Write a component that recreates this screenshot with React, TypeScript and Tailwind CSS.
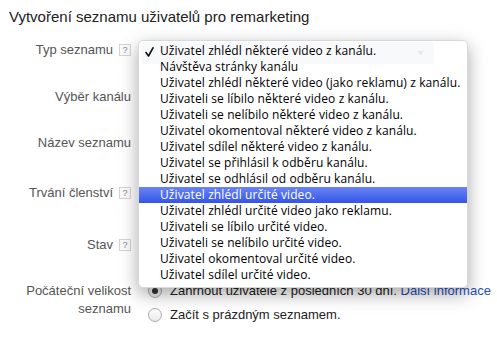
const options = [
  'Uživatel zhlédl některé video z kanálu.',
  'Návštěva stránky kanálu',
  'Uživatel zhlédl některé video (jako reklamu) z kanálu.',
  'Uživateli se líbilo některé video z kanálu.',
  'Uživateli se nelíbilo některé video z kanálu.',
  'Uživatel okomentoval některé video z kanálu.',
  'Uživatel sdílel některé video z kanálu.',
  'Uživatel se přihlásil k odběru kanálu.',
  'Uživatel se odhlásil od odběru kanálu.',
  'Uživatel zhlédl určité video.',
  'Uživatel zhlédl určité video jako reklamu.',
  'Uživateli se líbilo určité video.',
  'Uživateli se nelíbilo určité video.',
  'Uživatel okomentoval určité video.',
  'Uživatel sdílel určité video.',
];

function Help() {
  return (
    <span className="ml-[6px] inline-flex h-[12px] w-[12px] items-center justify-center border border-[#d4d4d4] bg-[#fafafa] text-[9px] leading-none text-[#888]">
      ?
    </span>
  );
}

function Label({ text, help }: { text: string; help?: boolean }) {
  return (
    <div className="flex w-[131px] shrink-0 items-center justify-end text-[13px] text-[#555]">
      <span>{text}</span>
      {help && <Help />}
    </div>
  );
}

function Radio({ checked }: { checked?: boolean }) {
  return (
    <span className="flex h-[14px] w-[14px] items-center justify-center rounded-full border border-[#aaa] bg-gradient-to-b from-white to-[#e8e8e8]">
      {checked && <span className="h-[6px] w-[6px] rounded-full bg-[#333]" />}
    </span>
  );
}

export default function App() {
  return (
    <div className="relative h-[346px] w-[497px] overflow-hidden bg-white font-['Liberation_Sans',Arial,sans-serif]">
      <div className="h-[38px] pl-[9px] pt-[7px] text-[15px] leading-[20px] text-[#222]">
        Vytvoření seznamu uživatelů pro remarketing
      </div>

      <div className="flex h-[47px] items-start">
        <div className="flex h-[24px]">
          <Label text="Typ seznamu" help />
        </div>
      </div>
      <div className="flex h-[46px] items-start">
        <div className="flex h-[24px]">
          <Label text="Výběr kanálu" />
        </div>
      </div>
      <div className="flex h-[50px] items-start">
        <div className="flex h-[24px]">
          <Label text="Název seznamu" />
        </div>
      </div>
      <div className="flex h-[52px] items-start">
        <div className="flex h-[24px]">
          <Label text="Trvání členství" help />
        </div>
      </div>
      <div className="flex h-[48px] items-start">
        <div className="flex h-[24px]">
          <Label text="Stav" help />
        </div>
      </div>
      <div className="flex items-start">
        <div className="w-[131px] pt-[1px] text-right text-[13px] leading-[18px] text-[#555]">
          Počáteční velikost seznamu
        </div>
        <div className="ml-[17px] flex flex-col gap-[10px] pt-[3px] text-[13px] leading-[14px] text-[#222]">
          <div className="flex items-center gap-[8px]">
            <Radio checked />
            <span>
              Zahrnout uživatele z posledních 30 dní.{' '}
              <span className="text-[#1f4fbf]">Další informace</span>
            </span>
          </div>
          <div className="flex items-center gap-[8px]">
            <Radio />
            <span>Začít s prázdným seznamem.</span>
          </div>
        </div>
      </div>

      {/* open select menu */}
      <div className="absolute left-[138px] top-[40px] w-[330px] rounded-[5px] border border-[#d8d8d8] bg-white pb-[4px] pt-[2px] shadow-[0_6px_18px_rgba(0,0,0,0.35)] font-['Open_Sans',sans-serif] text-[12px] tracking-[0.1px] text-black">
        <div className="absolute left-[2px] top-[1px] h-[22px] w-[293px] rounded-[3px] bg-[#f8f9fb]">
          <svg className="absolute right-[10px] top-[9px]" width="7" height="4" viewBox="0 0 7 4">
            <path d="M0 0 L3.5 4 L7 0 Z" fill="#e8e8ee" />
          </svg>
        </div>
        {options.map((o, i) => (
          <div
            key={o}
            className={`relative flex h-[16px] items-center pl-[21px] leading-[16px] ${
              i === 9 ? 'bg-gradient-to-b from-[#6b84f5] to-[#3553e6] text-white' : ''
            }`}
          >
            {i === 0 && (
              <svg className="absolute left-[6px] top-[4px]" width="9" height="10" viewBox="0 0 9 10">
                <path d="M1 5.5 L3.5 9 L8 0.8" fill="none" stroke="#111" strokeWidth="1.6" strokeLinecap="round" strokeLinejoin="round" />
              </svg>
            )}
            {o}
          </div>
        ))}
      </div>
    </div>
  );
}
